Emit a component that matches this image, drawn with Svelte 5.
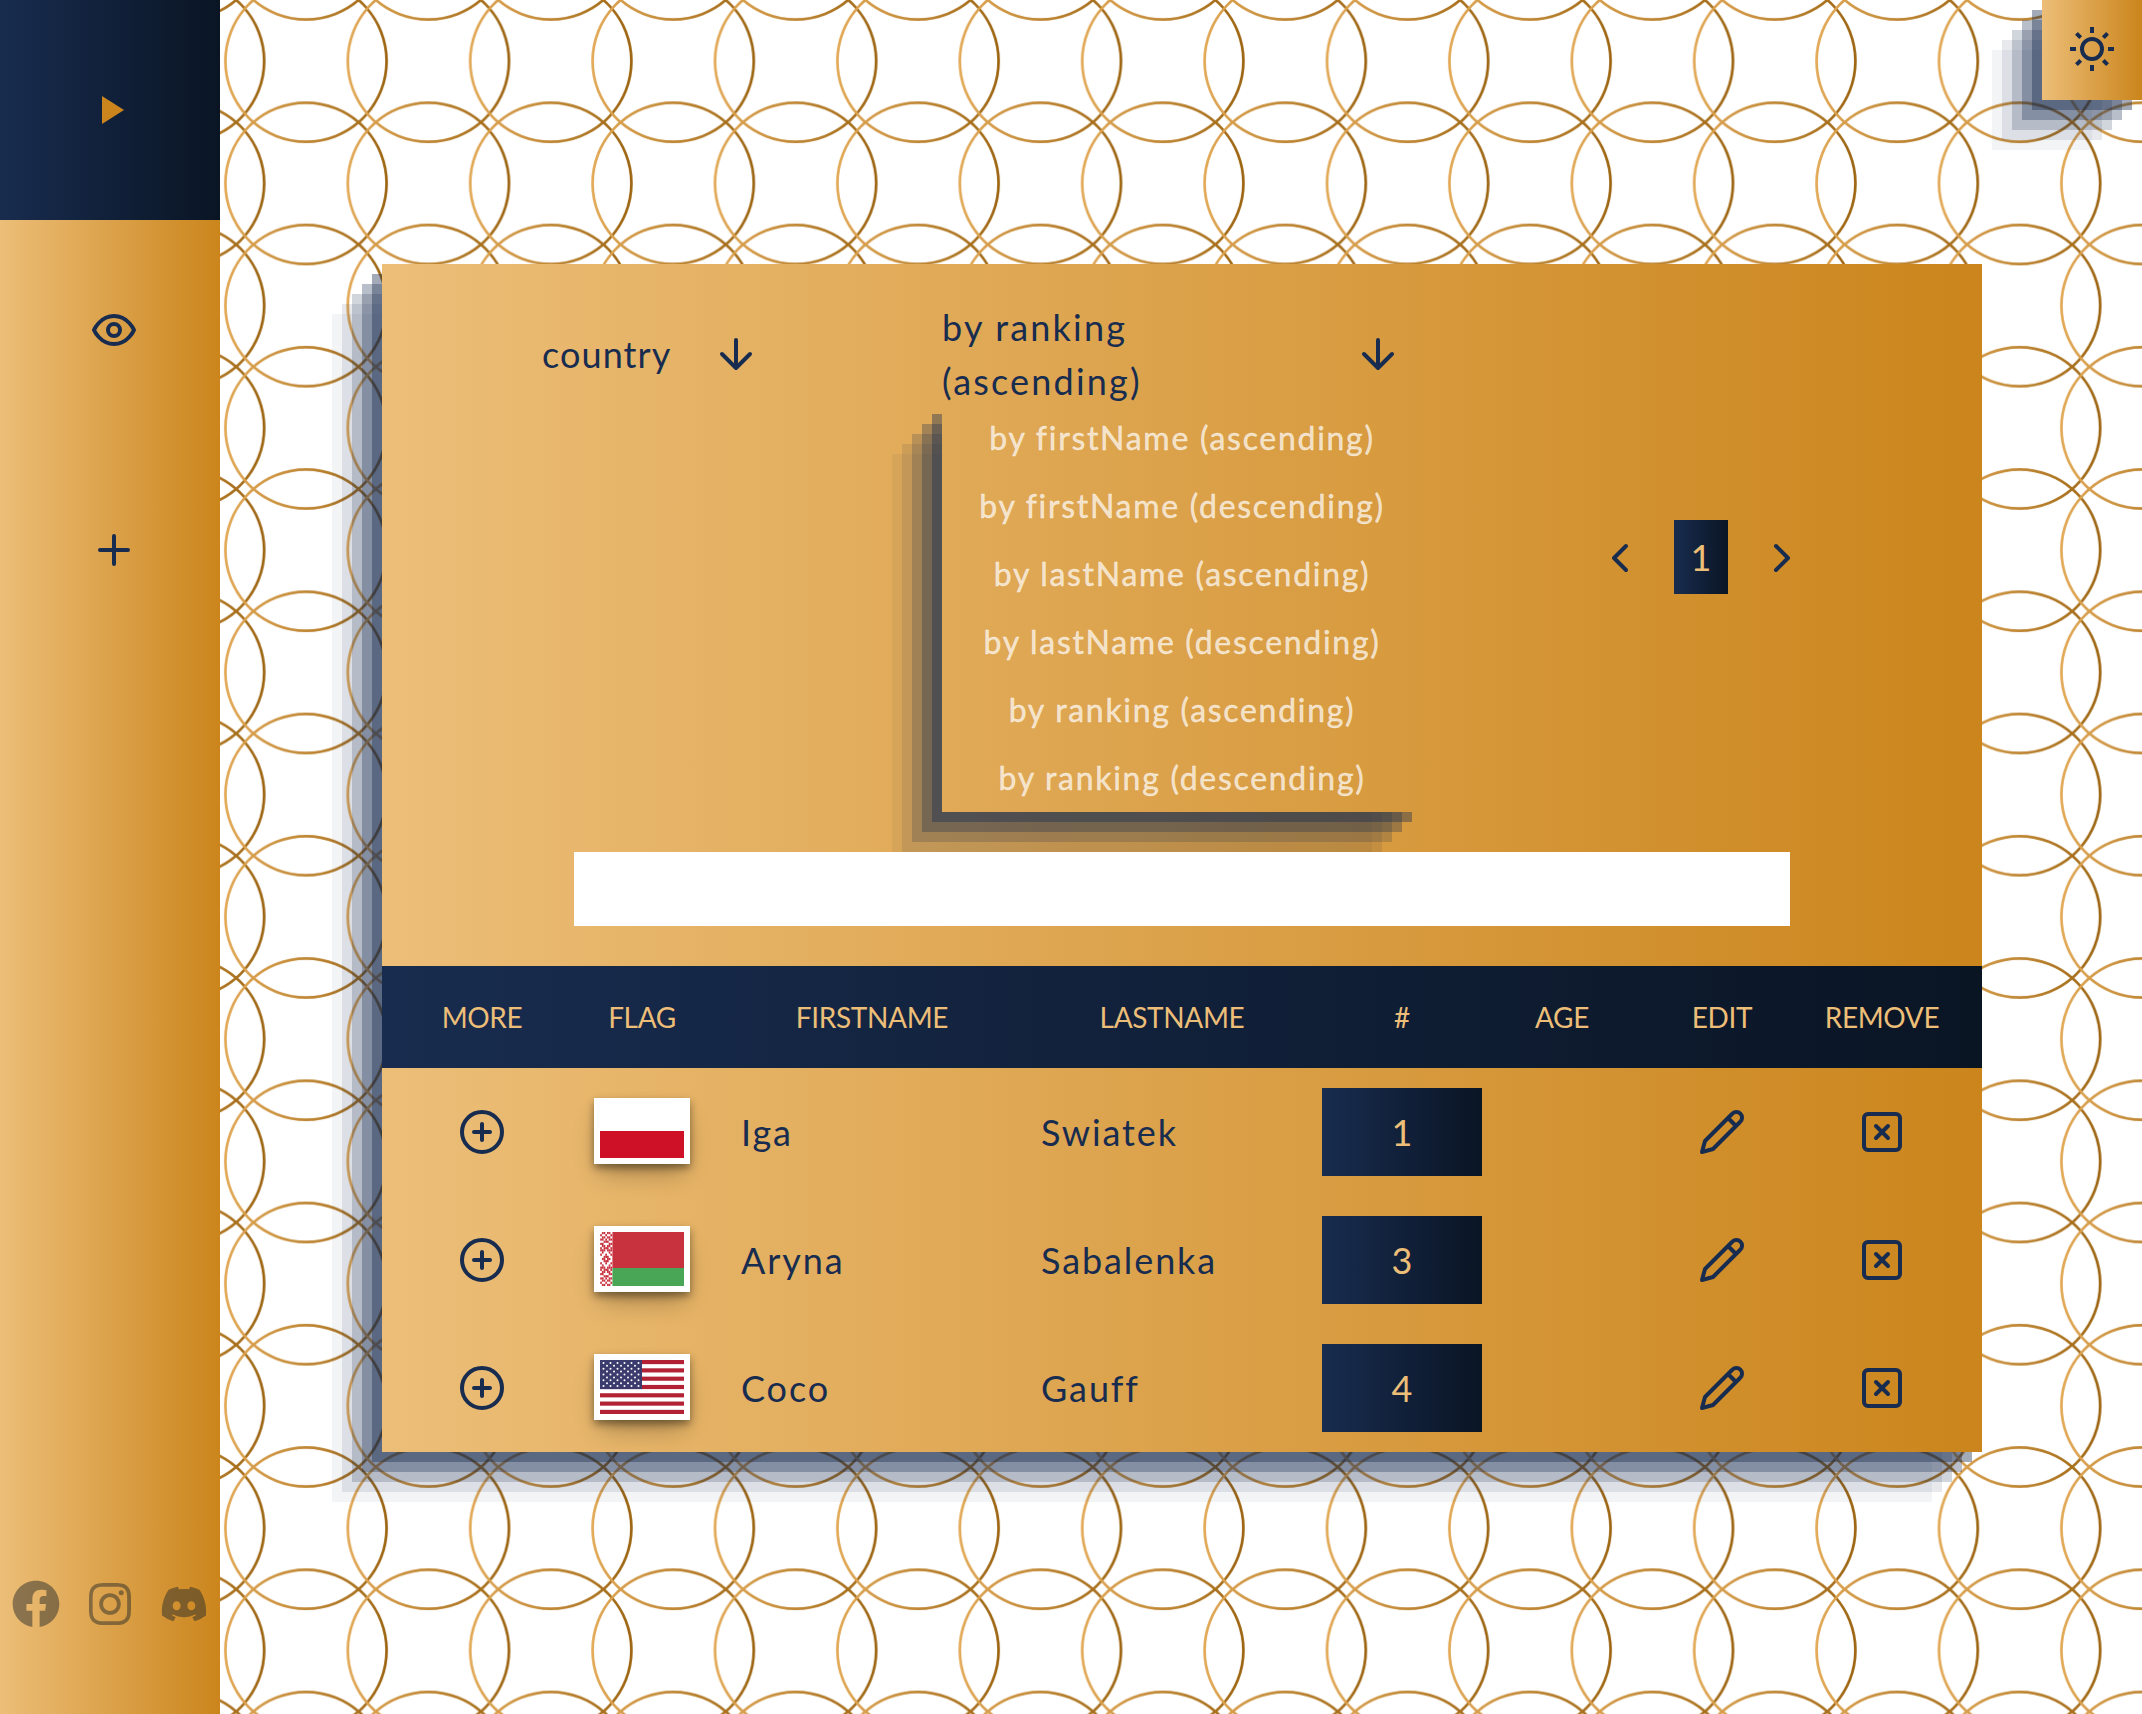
<script>
  const sortOptions = [
    'by firstName (ascending)',
    'by firstName (descending)',
    'by lastName (ascending)',
    'by lastName (descending)',
    'by ranking (ascending)',
    'by ranking (descending)'
  ];
  const columns = ['MORE', 'FLAG', 'FIRSTNAME', 'LASTNAME', '#', 'AGE', 'EDIT', 'REMOVE'];
  const players = [
    { first: 'Iga', last: 'Swiatek', rank: 1, flag: 'pl' },
    { first: 'Aryna', last: 'Sabalenka', rank: 3, flag: 'by' },
    { first: 'Coco', last: 'Gauff', rank: 4, flag: 'us' }
  ];

  // Neighbouring offsets, so rings overlap across tile borders
  const steps = [-1, 0, 1];

  // Woven ornament of the Belarusian flag, one string per line
  const ornament = [
    '0110110', '1001001', '0110110', '1101011', '0011100', '1100011', '0110110',
    '1011101', '1110111', '0100010', '1001001', '0011100', '0110110', '0011100',
    '1001001', '0100010', '1110111', '1011101', '0110110', '1100011', '0011100',
    '1101011', '0110110', '1001001', '0110110'
  ];

  const stars = [];
  for (let r = 0; r < 9; r++) {
    for (let c = 0; c < (r % 2 ? 5 : 6); c++) {
      stars.push([3.5 + c * 7 + (r % 2 ? 3.5 : 0), 2.9 + r * 2.9]);
    }
  }
</script>

<div class="page">
  <svg class="backdrop" aria-hidden="true">
    <defs>
      <linearGradient id="ring">
        <stop offset="0" stop-color="#e2a957" />
        <stop offset="1" stop-color="#9c6410" />
      </linearGradient>
      <pattern id="rings" width="122.4" height="122.25" patternUnits="userSpaceOnUse">
        {#each steps as row}
          {#each steps as col}
            <circle cx={61.2 + col * 122.4} cy={61.12 + row * 122.25} r="80.6" fill="none" stroke="url(#ring)" stroke-width="2.7" />
          {/each}
        {/each}
      </pattern>
    </defs>
    <rect width="100%" height="100%" fill="url(#rings)" />
  </svg>

  <aside class="sidebar">
    <button class="toggle" aria-label="Expand menu">
      <svg class="icon solid" viewBox="0 0 24 24"><path d="M8 5v14l11-7z" /></svg>
    </button>
    <nav>
      <a class="nav-item" href="#view" aria-label="View">
        <svg class="icon" viewBox="0 0 24 24"><path d="M2 12s3-7 10-7 10 7 10 7-3 7-10 7-10-7-10-7Z" /><circle cx="12" cy="12" r="3" /></svg>
      </a>
      <a class="nav-item" href="#add" aria-label="Add">
        <svg class="icon" viewBox="0 0 24 24"><path d="M5 12h14M12 5v14" /></svg>
      </a>
    </nav>
    <footer class="social">
      <svg viewBox="0 0 24 24"><path d="M12.001 2.002c-5.522 0-9.999 4.477-9.999 9.999 0 4.99 3.656 9.126 8.437 9.879v-6.988h-2.54v-2.891h2.54V9.798c0-2.508 1.493-3.891 3.776-3.891 1.094 0 2.24.195 2.24.195v2.459h-1.264c-1.24 0-1.628.772-1.628 1.563v1.875h2.771l-.443 2.891h-2.328v6.988C18.344 21.129 22 16.992 22 12.001c0-5.522-4.477-9.999-9.999-9.999z" /></svg>
      <svg viewBox="0 0 24 24"><path d="M11.999 7.377a4.623 4.623 0 1 0 0 9.248 4.623 4.623 0 0 0 0-9.248zm0 7.627a3.004 3.004 0 1 1 0-6.008 3.004 3.004 0 0 1 0 6.008z" /><circle cx="16.806" cy="7.207" r="1.078" /><path d="M20.533 6.111A4.605 4.605 0 0 0 17.9 3.479a6.606 6.606 0 0 0-2.186-.42c-.963-.042-1.268-.054-3.71-.054s-2.755 0-3.71.054a6.554 6.554 0 0 0-2.184.42 4.6 4.6 0 0 0-2.633 2.632 6.585 6.585 0 0 0-.419 2.186c-.043.962-.056 1.267-.056 3.71 0 2.442 0 2.753.056 3.71.015.748.156 1.486.419 2.187a4.61 4.61 0 0 0 2.634 2.632 6.584 6.584 0 0 0 2.185.45c.963.042 1.268.055 3.71.055s2.755 0 3.71-.055a6.615 6.615 0 0 0 2.186-.419 4.613 4.613 0 0 0 2.633-2.633c.263-.7.404-1.438.419-2.186.043-.962.056-1.267.056-3.71s0-2.753-.056-3.71a6.581 6.581 0 0 0-.421-2.217zm-1.218 9.532a5.043 5.043 0 0 1-.311 1.688 2.987 2.987 0 0 1-1.712 1.711 4.985 4.985 0 0 1-1.67.311c-.95.044-1.218.055-3.654.055-2.438 0-2.687 0-3.655-.055a4.96 4.96 0 0 1-1.669-.311 2.985 2.985 0 0 1-1.719-1.711 5.08 5.08 0 0 1-.311-1.669c-.043-.95-.053-1.218-.053-3.654 0-2.437 0-2.686.053-3.655a5.038 5.038 0 0 1 .311-1.687c.305-.789.93-1.41 1.719-1.712a5.01 5.01 0 0 1 1.669-.311c.951-.043 1.218-.055 3.655-.055s2.687 0 3.654.055a4.96 4.96 0 0 1 1.67.311 2.991 2.991 0 0 1 1.712 1.712 5.08 5.08 0 0 1 .311 1.669c.043.951.055 1.218.055 3.655 0 2.436 0 2.698-.043 3.654h-.011z" /></svg>
      <svg viewBox="-0.65 -0.65 25.3 25.3"><path d="M18.942 5.556a16.3 16.3 0 0 0-4.126-1.297c-.178.321-.385.754-.529 1.097a15.175 15.175 0 0 0-4.573 0 11.583 11.583 0 0 0-.535-1.097 16.274 16.274 0 0 0-4.129 1.3c-2.611 3.946-3.319 7.794-2.965 11.587a16.494 16.494 0 0 0 5.061 2.593 12.65 12.65 0 0 0 1.084-1.785 10.689 10.689 0 0 1-1.707-.831c.143-.106.283-.217.418-.331 3.291 1.539 6.866 1.539 10.118 0 .137.114.277.225.418.331-.541.326-1.114.606-1.71.832a12.52 12.52 0 0 0 1.084 1.785 16.46 16.46 0 0 0 5.064-2.595c.415-4.396-.709-8.209-2.973-11.589zM8.678 14.813c-.988 0-1.798-.922-1.798-2.045s.793-2.047 1.798-2.047 1.815.922 1.798 2.047c.001 1.123-.793 2.045-1.798 2.045zm6.644 0c-.988 0-1.798-.922-1.798-2.045s.793-2.047 1.798-2.047 1.815.922 1.798 2.047c0 1.123-.793 2.045-1.798 2.045z" /></svg>
    </footer>
  </aside>

  <main>
    <section class="card">
      <div class="controls">
        <div class="select country">
          <span class="label">country</span>
          <svg class="icon" viewBox="0 0 24 24"><path d="M12 5v14M19 12l-7 7-7-7" /></svg>
        </div>
        <div class="sort">
          <div class="select">
            <span class="label">by ranking (ascending)</span>
            <svg class="icon" viewBox="0 0 24 24"><path d="M12 5v14M19 12l-7 7-7-7" /></svg>
          </div>
          <ul class="options">
            {#each sortOptions as option}
              <li>{option}</li>
            {/each}
          </ul>
        </div>
        <div class="pager">
          <svg class="icon" viewBox="0 0 24 24"><path d="m15 18-6-6 6-6" /></svg>
          <span class="page-number">1</span>
          <svg class="icon" viewBox="0 0 24 24"><path d="m9 18 6-6-6-6" /></svg>
        </div>
      </div>
      <input class="search" type="text" aria-label="Search" />

      <div class="row head">
        {#each columns as column}
          <span>{column}</span>
        {/each}
      </div>
      {#each players as player}
        <div class="row">
          <svg class="icon" viewBox="0 0 24 24"><circle cx="12" cy="12" r="10" /><path d="M8 12h8M12 8v8" /></svg>
          <svg class="flag" viewBox="0 0 84 54">
            {#if player.flag === 'pl'}
              <rect width="84" height="54" fill="#fff" />
              <rect y="27" width="84" height="27" fill="#ce1126" />
            {:else if player.flag === 'by'}
              <rect width="84" height="36" fill="#c8313e" />
              <rect y="36" width="84" height="18" fill="#4aa657" />
              <rect width="12.4" height="54" fill="#fff" />
              {#each ornament as line, y}
                {#each line as cell, x}
                  {#if cell === '1'}
                    <rect x={x * 1.7 + 0.2} y={y * 2.16} width="1.7" height="2.16" fill="#c8313e" />
                  {/if}
                {/each}
              {/each}
            {:else}
              <rect width="84" height="54" fill="#fff" />
              {#each [0, 2, 4, 6, 8, 10, 12] as stripe}
                <rect y={stripe * 54 / 13} width="84" height={54 / 13} fill="#b22234" />
              {/each}
              <rect width="42" height="29.08" fill="#3c3b6e" />
              {#each stars as [x, y]}
                <circle cx={x} cy={y} r="1" fill="#fff" />
              {/each}
            {/if}
          </svg>
          <span class="name">{player.first}</span>
          <span class="name">{player.last}</span>
          <span class="rank">{player.rank}</span>
          <span></span>
          <svg class="icon" viewBox="0 0 24 24"><path d="M17 3a2.85 2.83 0 1 1 4 4L7.5 20.5 2 22l1.5-5.5ZM15 5l4 4" /></svg>
          <svg class="icon" viewBox="0 0 24 24"><rect x="3" y="3" width="18" height="18" rx="2" /><path d="m15 9-6 6M9 9l6 6" /></svg>
        </div>
      {/each}
    </section>
  </main>

  <button class="theme" aria-label="Switch theme">
    <svg class="icon solid" viewBox="0 0 24 24"><path d="M12 18a6 6 0 1 1 0-12 6 6 0 0 1 0 12zm0-2a4 4 0 1 0 0-8 4 4 0 0 0 0 8zM11 1h2v3h-2V1zm0 19h2v3h-2v-3zM3.515 4.929l1.414-1.414L7.05 5.636 5.636 7.05 3.515 4.93zM16.95 18.364l1.414-1.414 2.121 2.121-1.414 1.414-2.121-2.121zm2.121-14.85l1.414 1.415-2.121 2.121-1.414-1.414 2.121-2.121zM5.636 16.95l1.414 1.414-2.121 2.121-1.414-1.414 2.121-2.121zM23 11v2h-3v-2h3zM4 11v2H1v-2h3z" /></svg>
  </button>
</div>

<style>
  :global(body) {
    background: #fff;
    overflow: hidden;
  }

  .page {
    --navy: #182c4f;
    --gold: #ecbe78;
    --amber: #cb851c;
    --gold-gradient: linear-gradient(to right, #ecbe78, #cb851c);
    --navy-gradient: linear-gradient(to right, #182c4f, #0a1524);
    --steps: -10px 10px rgba(24, 44, 79, 0.4), -20px 20px rgba(24, 44, 79, 0.3),
      -30px 30px rgba(24, 44, 79, 0.2), -40px 40px rgba(24, 44, 79, 0.1),
      -50px 50px rgba(24, 44, 79, 0.05);
    position: relative;
    display: grid;
    grid-template-columns: 220px 1fr;
    height: 1714px;
    box-sizing: border-box;
    color: var(--navy);
    font-family: Lato, 'Open Sans', sans-serif;
    font-size: 36px;
    font-variant-ligatures: none;
    line-height: 1.5;
  }

  .backdrop {
    position: absolute;
    inset: 0;
    width: 100%;
    height: 100%;
  }

  button {
    border: 0;
    padding: 0;
    color: inherit;
  }

  .icon {
    flex: none;
    width: 48px;
    height: 48px;
    fill: none;
    stroke: currentColor;
    stroke-width: 2;
    stroke-linecap: round;
    stroke-linejoin: round;
  }

  .icon.solid {
    fill: currentColor;
    stroke: none;
  }

  .sidebar {
    position: relative;
    display: flex;
    flex-direction: column;
    background: var(--gold-gradient);
  }

  .toggle {
    display: grid;
    place-items: center;
    height: 220px;
    background: var(--navy-gradient);
    color: var(--amber);
  }

  .nav-item {
    display: grid;
    place-items: center;
    height: 220px;
    padding-left: 8px;
    color: inherit;
  }

  .social {
    display: flex;
    align-items: center;
    justify-content: center;
    gap: 18px;
    height: 220px;
    margin-top: auto;
    opacity: 0.5;
  }

  .social svg {
    flex: none;
    width: 56px;
    height: 56px;
    fill: #2c2e2b;
  }

  main {
    position: relative;
    padding: 264px 0 0 162px;
  }

  .card {
    width: 1600px;
    background: var(--gold-gradient);
    box-shadow: var(--steps);
  }

  .controls {
    display: grid;
    grid-template-columns: 400px 480px 558px;
    align-items: start;
    height: 508px;
    padding: 40px 0 40px 160px;
  }

  .select {
    display: flex;
    align-items: center;
    gap: 40px;
    height: 100px;
    padding-right: 20px;
  }

  .label {
    letter-spacing: 2.2px;
  }

  .country .label {
    width: 130px;
    letter-spacing: 1.1px;
  }

  .sort .label {
    flex: 1;
  }

  .options {
    margin: 0;
    padding: 0;
    list-style: none;
    box-shadow: var(--steps);
  }

  .options li {
    padding: 10px 0;
    color: rgba(255, 255, 255, 0.7);
    font-size: 32px;
    letter-spacing: 1.7px;
    text-align: center;
    white-space: nowrap;
    -webkit-text-stroke: 0.4px;
  }

  .pager {
    display: flex;
    align-items: center;
    align-self: center;
    justify-content: center;
    gap: 30px;
  }

  .page-number {
    box-sizing: border-box;
    width: 54px;
    margin-bottom: 2px;
    padding: 10px 0;
    background: var(--navy-gradient);
    color: var(--gold);
    text-align: center;
  }

  .search {
    position: relative;
    display: block;
    box-sizing: border-box;
    width: 1216px;
    height: 74px;
    margin: 0 auto 40px;
    border: 0;
    background: #fff;
    font: inherit;
  }

  .row {
    display: grid;
    grid-template-columns: 160px 160px 300px 300px repeat(4, 160px);
    align-items: center;
    justify-items: center;
    height: 128px;
    padding: 0 20px;
  }

  .head {
    height: 102px;
    background: var(--navy-gradient);
    color: var(--gold);
    font-size: 28px;
    letter-spacing: -0.35px;
  }

  .flag {
    width: 84px;
    height: 54px;
    margin-bottom: 2px;
    border: 6px solid #fff;
    box-shadow: 0 4px 8px rgba(0, 0, 0, 0.4), 0 14px 26px -6px rgba(0, 0, 0, 0.3);
  }

  .name {
    justify-self: start;
    padding-left: 19px;
    letter-spacing: 1.9px;
  }

  .rank {
    width: 160px;
    background: var(--navy-gradient);
    color: var(--gold);
    line-height: 88px;
    text-align: center;
  }

  .theme {
    position: absolute;
    top: 0;
    right: 0;
    display: grid;
    place-items: center;
    box-sizing: border-box;
    width: 100px;
    height: 100px;
    padding-bottom: 2px;
    background: var(--gold-gradient);
    box-shadow: var(--steps);
  }
</style>
